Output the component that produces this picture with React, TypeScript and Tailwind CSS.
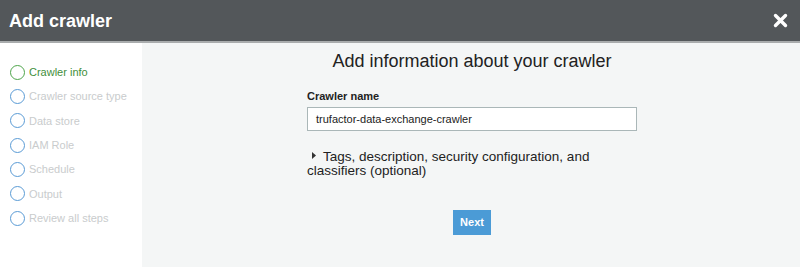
import React from "react";

const steps = [
  "Crawler info",
  "Crawler source type",
  "Data store",
  "IAM Role",
  "Schedule",
  "Output",
  "Review all steps",
];

export default function App() {
  return (
    <div
      className="w-[800px] h-[267px] flex flex-col overflow-hidden"
      style={{ fontFamily: '"Liberation Sans", Arial, sans-serif' }}
    >
      <div className="h-[43px] shrink-0 bg-[#53575a] border-b-2 border-[#a9acad] flex items-center justify-between pl-[9px] pr-[12px]">
        <div className="text-white font-bold text-[18px] leading-none">Add crawler</div>
        <svg width="15" height="15" viewBox="0 0 15 15">
          <path d="M2.5 2.5 L12.5 12.5 M12.5 2.5 L2.5 12.5" stroke="white" strokeWidth="3.4" strokeLinecap="round" />
        </svg>
      </div>
      <div className="flex flex-1">
        <div className="w-[142px] shrink-0 bg-white pt-[20px] pl-[10px] flex flex-col gap-[6.4px]">
          {steps.map((s, i) => (
            <div key={s} className="flex items-center h-[18px]">
              <span
                className={`w-[15px] h-[15px] rounded-full border-[1.5px] ${
                  i === 0 ? "border-[#4ea54a]" : "border-[#5a9bd5]"
                }`}
              />
              <span
                className={`ml-[4px] text-[11px] ${
                  i === 0 ? "text-[#3f8f3b]" : "text-[#c9cccd]"
                }`}
              >
                {s}
              </span>
            </div>
          ))}
        </div>
        <div className="flex-1 bg-[#f4f6f6] flex flex-col items-center">
          <div className="text-[18px] text-[#222] mt-[8px] leading-[21px] pl-[2px]">
            Add information about your crawler
          </div>
          <div className="w-[330px] mt-[17px] ml-[2px]">
            <div className="text-[11px] font-bold text-[#222] leading-[14px]">Crawler name</div>
            <div className="mt-[4px] h-[24px] bg-white border border-[#aab7b8] flex items-center pl-[8px] text-[11px] text-[#222]">
              trufactor-data-exchange-crawler
            </div>
            <div className="mt-[19px] text-[13.5px] text-[#222] leading-[14px]">
              <span className="inline-block ml-[5px] mr-[7px] align-middle relative top-[-2px]">
                <svg width="4" height="7" viewBox="0 0 4 7">
                  <path d="M0 0 L4 3.5 L0 7 Z" fill="#333" />
                </svg>
              </span>
              Tags, description, security configuration, and classifiers (optional)
            </div>
          </div>
          <button className="mt-[32px] ml-[2px] w-[38px] h-[25px] bg-[#4b9bd6] text-white text-[11px] font-bold">
            Next
          </button>
        </div>
      </div>
    </div>
  );
}
